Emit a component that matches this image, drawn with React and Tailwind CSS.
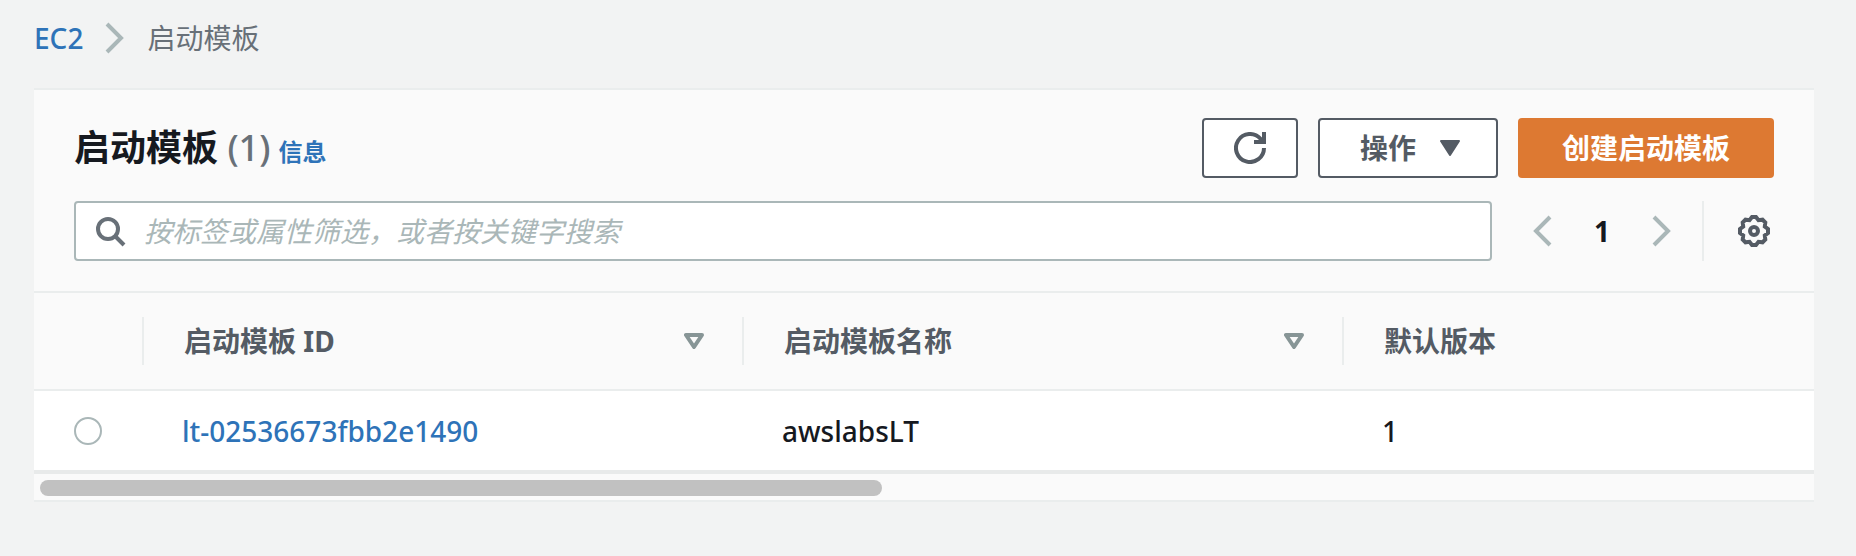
function Chevron({ left = false }) {
  return (
    <svg className="h-8 w-5 shrink-0" viewBox="0 0 20 32" fill="none" stroke="#aab7b8" strokeWidth="4" aria-hidden="true">
      <path d={left ? "M18 2 4 16l14 14" : "M2 2l14 14L2 30"} />
    </svg>
  );
}

function SearchIcon() {
  return (
    <svg className="size-8 shrink-0" viewBox="0 0 32 32" fill="none" stroke="#687078" strokeWidth="4" aria-hidden="true">
      <circle cx="14" cy="14" r="10" />
      <path d="M21 21l9 9" />
    </svg>
  );
}

function RefreshIcon() {
  return (
    <svg className="size-8" viewBox="0 0 32 32" fill="none" stroke="#545b64" strokeWidth="4" aria-hidden="true">
      <path d="M30 16a14 14 0 1 1-3.500-9.260L29 10" />
      <path d="M30 0v10H20" />
    </svg>
  );
}

function GearIcon() {
  return (
    <svg className="size-8" viewBox="0 0 32 32" fill="none" stroke="#545b64" strokeWidth="4" aria-hidden="true">
      <path d="M14 2h4l2.500 3.200 4-.5 2.800 2.800-.5 4L30 14v4l-3.200 2.500.5 4-2.800 2.800-4-.5L18 30h-4l-2.500-3.200-4 .5-2.800-2.800.5-4L2 18v-4l3.200-2.500-.5-4 2.800-2.800 4 .5z" />
      <circle cx="16" cy="16" r="4" />
    </svg>
  );
}

function HeaderCell({ children, sortable = false, divided = false }) {
  return (
    <th scope="col" className="p-0 text-left font-bold text-[#545b64]">
      <div className={`flex h-12 items-center justify-between pr-[38px] pl-10 ${divided ? "border-r-2 border-[#eaeded]" : ""}`}>
        <span>{children}</span>
        {sortable && (
          <button type="button" aria-label="排序" className="flex h-12 items-center">
            <svg className="h-4 w-5" viewBox="0 0 20 16" fill="none" stroke="#879596" strokeWidth="4" strokeLinejoin="round" aria-hidden="true">
              <path d="M2 2h16l-8 12z" />
            </svg>
          </button>
        )}
      </div>
    </th>
  );
}

export default function App() {
  return (
    <div lang="zh-CN" className="min-h-screen bg-[#f2f3f3] pr-[42px] pb-14 pl-[34px] font-['Noto_Sans','Noto_Sans_CJK_SC',sans-serif] text-[28px] leading-10 text-[#16191f]">
      <nav aria-label="导航路径" className="flex h-[88px] items-start pt-[18px]">
        <ol className="flex items-center gap-[22px]">
          <li><a href="#ec2" className="font-medium text-[#2e73b8]">EC2</a></li>
          <li><Chevron /></li>
          <li aria-current="page" className="text-[#687078]">启动模板</li>
        </ol>
      </nav>

      <main className="border-y-2 border-[#eaeded] bg-[#fafafa]">
        <header className="flex flex-col gap-[23px] px-10 pt-7 pb-[30px]">
          <div className="flex items-center justify-between">
            <div className="flex items-baseline gap-2 pt-1">
              <h1 className="text-[36px] font-bold">
                启动模板 <span className="font-medium text-[#687078]">(1)</span>
              </h1>
              <a href="#info" className="text-[24px] font-bold text-[#2e73b8]">信息</a>
            </div>
            <div className="flex gap-5 font-bold">
              <button type="button" aria-label="刷新" className="flex h-[60px] w-24 items-center justify-center rounded-[4px] border-2 border-[#545b64] bg-white">
                <RefreshIcon />
              </button>
              <button type="button" className="flex h-[60px] items-center gap-6 rounded-[4px] border-2 border-[#545b64] bg-white pr-9 pl-10 text-[#545b64]">
                操作
                <svg className="h-4 w-5" viewBox="0 0 20 16" fill="#545b64" stroke="#545b64" strokeWidth="2" strokeLinejoin="round" aria-hidden="true">
                  <path d="M1 1h18l-9 14z" />
                </svg>
              </button>
              <button type="button" className="h-[60px] rounded-[4px] bg-[#dd7932] px-11 text-white">创建启动模板</button>
            </div>
          </div>

          <div className="flex items-center">
            <label className="flex h-[60px] flex-1 items-center gap-[18px] rounded-[4px] border-2 border-[#aab7b8] bg-white px-[18px]">
              <SearchIcon />
              <input
                type="text"
                aria-label="筛选启动模板"
                placeholder="按标签或属性筛选，或者按关键字搜索"
                className="h-full min-w-0 flex-1 bg-transparent outline-none placeholder:text-[#aab7b8] placeholder:italic"
              />
            </label>
            <nav aria-label="分页" className="ml-10 flex items-center gap-[42px]">
              <button type="button" aria-label="上一页" disabled><Chevron left /></button>
              <button type="button" aria-current="page" className="font-bold">1</button>
              <button type="button" aria-label="下一页" disabled><Chevron /></button>
            </nav>
            <div className="ml-[30px] flex h-[60px] items-center border-l-2 border-[#eaeded] pr-1 pl-[34px]">
              <button type="button" aria-label="首选项"><GearIcon /></button>
            </div>
          </div>
        </header>

        <table className="w-full table-fixed border-collapse">
          <colgroup>
            <col className="w-[110px]" />
            <col className="w-[600px]" />
            <col className="w-[600px]" />
            <col />
          </colgroup>
          <thead>
            <tr className="h-[98px] border-y-2 border-[#eaeded]">
              <HeaderCell divided />
              <HeaderCell sortable divided>启动模板 ID</HeaderCell>
              <HeaderCell sortable divided>启动模板名称</HeaderCell>
              <HeaderCell>默认版本</HeaderCell>
            </tr>
          </thead>
          <tbody className="font-medium">
            <tr className="h-20 bg-white">
              <td className="pl-10">
                <input
                  type="radio"
                  name="template"
                  aria-label="选择 awslabsLT"
                  className="block size-7 appearance-none rounded-full border-2 border-[#aab7b8] bg-white checked:border-8 checked:border-[#2e73b8]"
                />
              </td>
              <td className="pl-[38px]"><a href="#template" className="text-[#2e73b8]">lt-02536673fbb2e1490</a></td>
              <td className="pl-[38px]">awslabsLT</td>
              <td className="pl-[38px]">1</td>
            </tr>
          </tbody>
        </table>

        <div className="border-t-4 border-[#e8eaea] px-1.5 pt-1.5 pb-1">
          <div className="h-4 w-[47.6%] rounded-full bg-[#c1c1c1]" />
        </div>
      </main>
    </div>
  );
}
